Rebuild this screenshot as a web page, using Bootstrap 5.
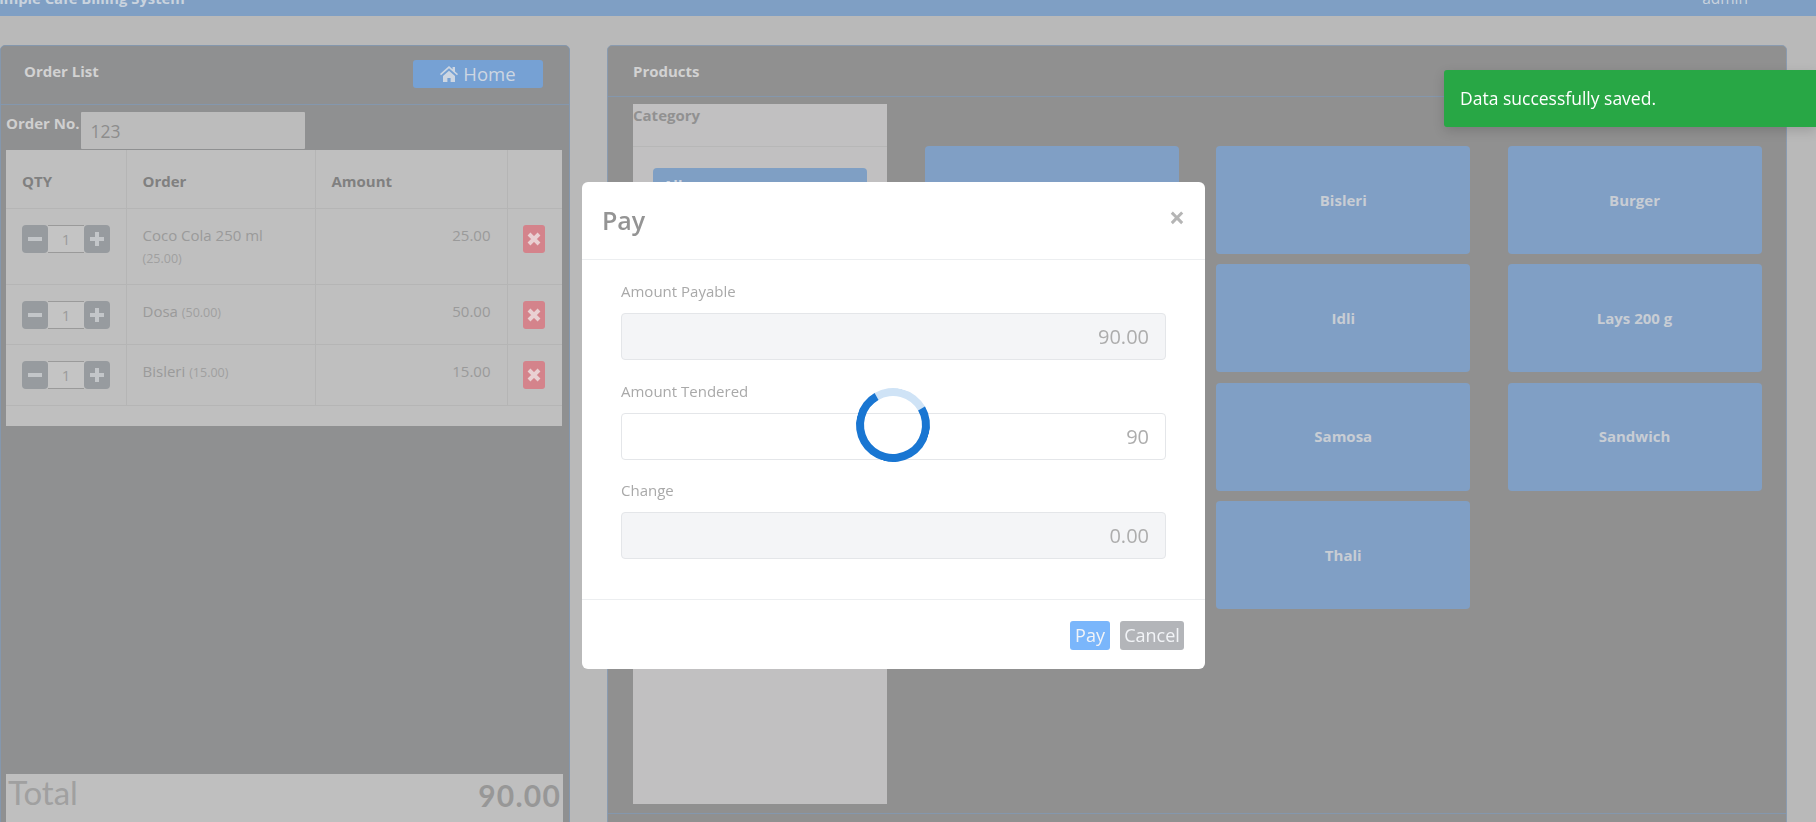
<!DOCTYPE html>
<html lang="en">
<head>
  <meta charset="UTF-8" />
  <meta name="viewport" content="width=device-width, initial-scale=1" />
  <title>Simple Cafe Billing System</title>
  <link href="https://cdn.jsdelivr.net/npm/bootstrap@5.3.2/dist/css/bootstrap.min.css" rel="stylesheet" />
  <style>
    html, body { height: 822px; overflow: hidden; }
    body { background: #b9b9b9; font-family: "Open Sans", "Liberation Sans", sans-serif; font-size: 15px; color: #999; }

    .top-strip { height: 16px; background: #7f9fc4; color: #c9d3de; font-weight: 700; overflow: hidden; line-height: 20px; }
    .top-strip .brand { margin: 0 0 8px -9px; font-size: 14.8px; }
    .top-strip .user { margin: 0 68px 8px 0; font-weight: 400; font-size: 15.5px; }

    .page-wrap { gap: 37px; padding-top: 29px; }
    .panel { border: 1px solid #8497ad; border-radius: 5px; background: #8f9091; height: 830px; }
    .panel-left { width: 570px; }
    .panel-right { width: 1180px; background: #909090; border-color: #8a9bb0; }
    .panel-head { padding: 0 24px; border-bottom: 1px solid #8497ad; color: #d2d2d2; font-weight: 700; }
    .panel-left .panel-head { height: 59px; padding-left: 23px; }
    .panel-left .panel-head > span { margin-bottom: 8px; }
    .panel-right .panel-head { height: 51px; padding-left: 25px; }
    .btn-home { width: 130px; height: 28px; margin-right: 2px; margin-top: -3px; padding: 0; background: #76a1d4; border: 0; border-radius: 3px; color: #cdd6e2; font-size: 18.5px; line-height: 28px; }
    .btn-home svg { width: 18px; height: 16px; margin-right: 5px; vertical-align: -1px; fill: #cdd6e2; }

    .order-line { height: 45px; padding: 7px 0 0 5px; }
    .order-line label { color: #cfcfcf; font-weight: 700; }
    .order-line input { width: 224px; height: 37px; margin-left: 1px; border: 0; border-radius: 1px; background: #bcbcbc; color: #8d8d8d; font-size: 17.5px; padding: 0 10px; }

    .order-box { margin: 0 7px 0 5px; height: 276px; background: #bfbfbf; }
    .order-table { table-layout: fixed; width: 556px; margin: 0; --bs-table-bg: transparent; --bs-table-color: #9a9a9a; --bs-table-border-color: #b5b5b5; }
    .order-table th { height: 58px; padding: 15px 16px; color: #808080; font-weight: 700; }
    .order-table td { padding: 15px 16px; }
    .order-table tr > * { border-width: 0 1px 1px 0; }
    .order-table tr > *:last-child { border-right: 0; }
    .row-a { height: 76px; } .row-b { height: 60px; } .row-c { height: 61px; }
    .price-note { font-size: 12.5px; color: #a0a0a0; }
    .qty-btn { width: 26px; height: 28px; padding: 0; border: 0; background: #979b9f; border-radius: 4px; display: flex; align-items: center; justify-content: center; }
    .qty-btn svg { width: 16px; height: 16px; stroke: #c3c6c9; stroke-width: 4; fill: none; }
    .qty-val { width: 36px; height: 28px; border: 1px solid #9a9a9a; border-width: 1px 0; background: #c4c4c4; color: #9b9b9b; text-align: center; line-height: 27px; }
    .del-btn { width: 22px; height: 28px; padding: 0; border: 0; border-radius: 3px; background: #d4838b; display: flex; align-items: center; justify-content: center; }
    .del-btn svg { width: 14px; height: 14px; stroke: #e9d0d2; stroke-width: 4; fill: none; }
    .order-table .cell-del { padding: 16px 0 0 15px; }
    .order-table .cell-qty { padding: 16px 0 0 16px; }

    .total-bar { margin: 0 6px 0 5px; height: 100px; background: #bfbfbf; font-family: Lato, "Open Sans", sans-serif; color: #979797; padding: 0 2px; }
    .total-bar .lbl { font-size: 33px; font-weight: 400; line-height: 36px; color: #a0a0a0; }
    .total-bar .num { font-size: 30px; font-weight: 700; line-height: 42px; letter-spacing: .04em; }

    .shop-wrap { padding: 7px 25px 0; height: 717px; border-bottom: 1px solid #8497ad; }
    .cat-col { width: 254px; background: #c1c0c1; height: 700px; flex-shrink: 0; }
    .cat-head { height: 43px; border-bottom: 1px solid #b7b7b7; color: #919191; font-weight: 700; line-height: 22px; }
    .cat-all { margin: 21px 20px 0 20px; height: 50px; background: #7f9fc4; border-radius: 4px; color: #cdd6e2; font-weight: 700; padding: 6px 10px; }
    .tile-grid { display: grid; grid-template-columns: repeat(3, 254px); grid-auto-rows: 108px; column-gap: 37.25px; row-gap: 10.3px; margin: 42px 0 0 38px; }
    .tile { background: #809fc5; border-radius: 4px; color: #c8cdd4; font-weight: 700; display: flex; align-items: center; justify-content: center; }

    .pay-dialog { max-width: 623px; margin: 182px 0 0 582px; }
    .pay-dialog .modal-content { height: 487px; border: 0; border-radius: 6px; }
    .pay-dialog .modal-header { height: 78px; padding: 0 20px; border-color: #eceef0; align-items: center; }
    .pay-dialog .modal-title { font-size: 25px; font-weight: 600; color: #949494; }
    .close-x { color: #b5b5b5; font-size: 28px; font-weight: 700; line-height: 1; margin-top: -8px; }
    .pay-dialog .modal-body { padding: 22px 39px 0; flex: none; height: 339px; }
    .pay-dialog .form-label { display: block; color: #a9a9a9; margin: 0; line-height: 19px; height: 31px; }
    .pay-dialog .form-control { height: 47px; font-size: 20px; text-align: right; color: #adadad; padding: 0 16px; border-color: #e4e6e9; border-radius: 4px; margin-bottom: 21.6px; background: #fff; }
    .pay-dialog .form-control:disabled { background: #f4f5f7; }
    .pay-dialog .modal-footer { height: 70px; padding: 1px 21px 0 0; border-color: #eceef0; gap: 10px; }
    .pay-dialog .modal-footer .btn { margin: 0; height: 29px; padding: 0; font-size: 18px; line-height: 29px; border: 0; border-radius: 3px; color: #f2f4f7; }
    .btn-pay { width: 40px; background: #7ab6fb; }
    .btn-off { width: 64px; background: #b3b5b9; }

    .busy-ring { position: fixed; left: 856px; top: 388px; width: 74px; height: 74px; border: 8px solid #1976d2; border-top-color: #cfe3f6; border-radius: 50%; transform: rotate(15deg); z-index: 1060; }
    .saved-note { position: fixed; top: 70px; right: 0; width: 372px; height: 57px; background: #28a745; color: #fff; font-size: 17.5px; line-height: 57px; padding-left: 16px; border-radius: 3px 0 0 3px; box-shadow: 0 4px 12px rgba(0,0,0,.15); z-index: 1070; }
  </style>
</head>
<body>
  <div class="top-strip d-flex justify-content-between align-items-end">
    <span class="brand">Simple Cafe Billing System</span>
    <span class="user">admin</span>
  </div>

  <div class="page-wrap d-flex">
    <div class="panel panel-left d-flex flex-column">
      <div class="panel-head d-flex justify-content-between align-items-center">
        <span>Order List</span>
        <button class="btn-home" type="button">
          <svg viewBox="0 0 18 16"><path d="M9 0 0 8l1 1.2L9 2.2l8 7L18 8l-3-2.6V1h-2.4v2.3zM3 10v6h4.4v-4h3.2v4H15v-6L9 4.8z" /></svg>Home
        </button>
      </div>
      <div class="order-line d-flex">
        <label for="orderNo">Order No.</label>
        <input id="orderNo" type="text" value="123" />
      </div>
      <div class="order-box">
        <table class="table order-table">
          <colgroup><col style="width:120px"><col style="width:189px"><col style="width:192px"><col style="width:55px"></colgroup>
          <thead>
            <tr><th>QTY</th><th>Order</th><th>Amount</th><th></th></tr>
          </thead>
          <tbody id="orderRows"></tbody>
        </table>
      </div>
      <div class="flex-grow-1"></div>
      <div class="total-bar d-flex justify-content-between">
        <span class="lbl">Total</span>
        <span class="num">90.00</span>
      </div>
    </div>

    <div class="panel panel-right">
      <div class="panel-head d-flex align-items-center">Products</div>
      <div class="shop-wrap d-flex align-items-start">
        <div class="cat-col">
          <div class="cat-head">Category</div>
          <div class="cat-all">All</div>
        </div>
        <div class="tile-grid">
          <div class="tile"></div>
          <div class="tile">Bisleri</div>
          <div class="tile">Burger</div>
          <div class="tile"></div>
          <div class="tile">Idli</div>
          <div class="tile">Lays 200 g</div>
          <div class="tile"></div>
          <div class="tile">Samosa</div>
          <div class="tile">Sandwich</div>
          <div class="tile"></div>
          <div class="tile">Thali</div>
        </div>
      </div>
    </div>
  </div>

  <div class="modal d-block" tabindex="-1">
    <div class="modal-dialog pay-dialog">
      <div class="modal-content">
        <div class="modal-header">
          <h5 class="modal-title">Pay</h5>
          <span class="close-x">×</span>
        </div>
        <div class="modal-body">
          <label class="form-label">Amount Payable</label>
          <input class="form-control" type="text" value="90.00" disabled />
          <label class="form-label">Amount Tendered</label>
          <input class="form-control" type="text" value="90" />
          <label class="form-label">Change</label>
          <input class="form-control" type="text" value="0.00" disabled />
        </div>
        <div class="modal-footer">
          <button type="button" class="btn btn-pay">Pay</button>
          <button type="button" class="btn btn-off">Cancel</button>
        </div>
      </div>
    </div>
  </div>

  <div class="busy-ring"></div>
  <div class="saved-note">Data successfully saved.</div>

  <script src="https://cdn.jsdelivr.net/npm/bootstrap@5.3.2/dist/js/bootstrap.bundle.min.js"></script>
  <script>
    const pedidos = [
      { nome: 'Coco Cola 250 ml', preco: '25.00', total: '25.00', cls: 'row-a', quebra: true },
      { nome: 'Dosa', preco: '50.00', total: '50.00', cls: 'row-b' },
      { nome: 'Bisleri', preco: '15.00', total: '15.00', cls: 'row-c' }
    ];
    const minus = '<svg viewBox="0 0 16 16"><path d="M1 8h14" /></svg>';
    const plus = '<svg viewBox="0 0 16 16"><path d="M1 8h14M8 1v14" /></svg>';
    const cross = '<svg viewBox="0 0 14 14"><path d="M2 2l10 10M12 2 2 12" /></svg>';

    document.getElementById('orderRows').innerHTML = pedidos.map(p => `
      <tr class="${p.cls}">
        <td class="cell-qty">
          <div class="d-flex">
            <button type="button" class="qty-btn">${minus}</button>
            <div class="qty-val">1</div>
            <button type="button" class="qty-btn">${plus}</button>
          </div>
        </td>
        <td>${p.nome}${p.quebra ? '<br>' : ' '}<span class="price-note">(${p.preco})</span></td>
        <td class="text-end">${p.total}</td>
        <td class="cell-del"><button type="button" class="del-btn">${cross}</button></td>
      </tr>`).join('');
  </script>
</body>
</html>
